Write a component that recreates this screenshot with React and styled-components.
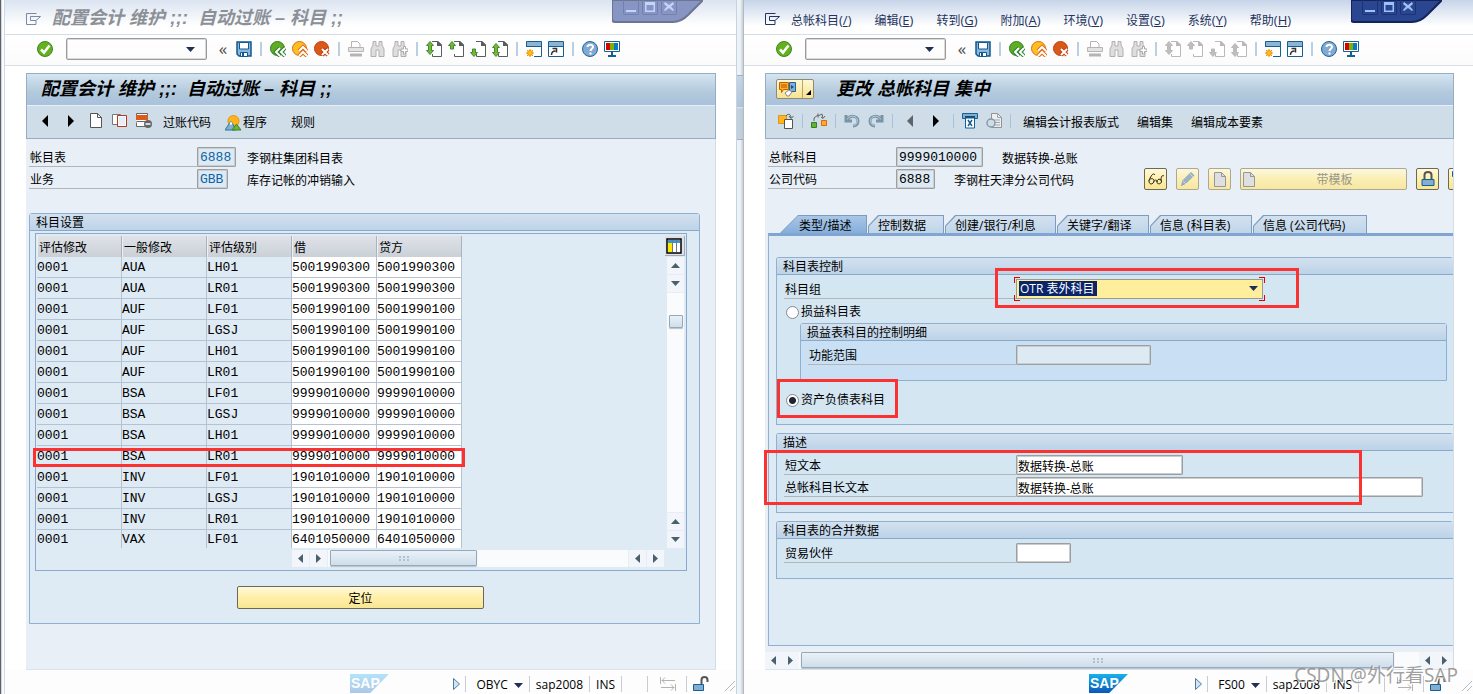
import React from "react";
import styled, { createGlobalStyle, css } from "styled-components";

const GlobalStyle = createGlobalStyle`
  * {
    box-sizing: border-box;
  }

  body {
    margin: 0;
    background: #ffffff;
    color: #000000;
    font-family: "Open Sans", "Noto Sans CJK SC", sans-serif;
    font-size: 12px;
    line-height: 16px;
  }

  button,
  input,
  select {
    font: inherit;
    color: inherit;
    margin: 0;
    padding: 0;
    border: 0;
    border-radius: 0;
    background: none;
  }

  svg {
    display: block;
  }
`;

const mono = css`
  font-family: "Liberation Mono", "Noto Sans CJK SC", monospace;
  font-size: 13px;
`;

/* ---------- desktop and windows ---------- */

const Desktop = styled.div`
  position: relative;
  display: grid;
  grid-template-columns: 5px 731fr 8px 729fr;
  min-height: 100vh;
  overflow: hidden;
`;

const Edge = styled.div`
  border-left: 1px solid #5d6068;
  border-right: 1px solid #cdd8ea;
  background: linear-gradient(to right, #c4c7cd, #f6f8fb 50%, #ffffff);
`;

const Gap = styled.div`
  display: flex;
  flex-direction: column;
  border-left: 1px solid #c6d3e4;
  border-right: 1px solid #b4bac4;
  background: linear-gradient(to right, #edf2f7, #eef3f7 50%, #c9ced5);
`;

const GapPanel = styled.div`
  height: 65px;
  margin-top: 75px;
  border-top: 1px solid #8da3bd;
  border-bottom: 1px solid #8da3bd;
  background: linear-gradient(#bdd0e0, #a3bad4 31px, #dfe7ee 31px, #b8c8d6 33px);
  opacity: 0.8;
`;

const Window = styled.section`
  position: relative;
  display: flex;
  flex-direction: column;
  min-width: 0;
  background: #ffffff;
`;

const MenuBar = styled.div`
  display: flex;
  align-items: center;
  height: 35px;
  padding: 2px 0 0 21px;
  border-bottom: 1px solid #d5dde6;
  background: linear-gradient(${(p) => (p.$active ? "#c6d4e9" : "#dbe4f1")}, #ffffff 26px);
  color: #24345f;
`;

const Menu = styled.nav`
  display: flex;
  gap: 23px;
  margin-left: 10px;
  padding-top: 4px;
`;

const MenuButton = styled.button`
  white-space: nowrap;
  font-size: 13px;
  span {
    font-size: 12px;
  }
`;

const TitleText = styled.h1`
  margin: 0;
  font-family: "Liberation Sans", "Noto Sans CJK SC", sans-serif;
  font-size: 18px;
  line-height: 22px;
  font-weight: bold;
  font-style: italic;
  white-space: pre;
`;

const GhostTitle = styled(TitleText)`
  margin-left: 10px;
  color: #8b9097;
`;

const WindowControls = styled.div`
  position: absolute;
  top: 0;
  right: ${(p) => (p.$active ? "31px" : "33px")};
  width: 91px;
  height: 24px;
`;

const ControlsShape = styled.svg`
  position: absolute;
  inset: 0;
`;

const ControlButtons = styled.div`
  position: absolute;
  top: 0;
  left: 11px;
  display: flex;
  gap: 3px;
`;

const ControlButton = styled.button`
  width: 16px;
  height: 15px;
  border: 1px solid ${(p) => (p.$active ? "#1d3274" : "#7181ab")};
  border-top: 0;
  border-radius: 0 0 2px 2px;
`;

const Toolbar = styled.div`
  display: flex;
  align-items: center;
  gap: 6px;
  height: 31px;
  padding: 0 0 2px 32px;
  border-bottom: 1px solid #d9dee6;
  background: linear-gradient(#ffffff, #fbfbfc);
`;

const Separator = styled.span`
  flex: none;
  width: 2px;
  height: 14px;
  margin: 0 2px;
  background: #b9cfe6;
`;

const AppSeparator = styled.span`
  flex: none;
  width: 1px;
  height: 14px;
  background: #a9c2dc;
`;

const IconButton = styled.button`
  flex: none;
  width: ${(p) => (p.$nav ? "18px" : "16px")};
  height: 16px;
  display: flex;
  justify-content: center;
`;

const CommandField = styled.div`
  display: flex;
  width: 141px;
  height: 22px;
  margin: 0 5px 0 7px;
  border: 1px solid #9a9a9a;
  border-radius: 2px;
  box-shadow: inset 0 0 0 1px #d9d9d9;

  input {
    flex: 1;
    min-width: 0;
    padding: 0 4px;
  }

  button {
    width: 20px;
    padding-top: 1px;
  }
`;

const Chevrons = styled.button`
  font-size: 17px;
  line-height: 16px;
  color: #4a4a4a;
  width: 10px;
  height: 20px;
  margin-right: 2px;
`;

const Main = styled.div`
  flex: 1;
  display: flex;
  flex-direction: column;
  margin: 7px ${(p) => p.$right} 0 21px;
`;

const ScreenHeader = styled.header`
  border: 1px solid #97adc6;
`;

const ScreenTitle = styled.div`
  display: flex;
  align-items: center;
  height: 32px;
  padding: 0 0 1px ${(p) => (p.$withButton ? "10px" : "14px")};
  border-bottom: 1px solid #e6f0f8;
  background: linear-gradient(#d5e4f0, #b2c9dc 60%, #a9c1dc);
`;

const ServiceButton = styled.button`
  display: flex;
  width: 38px;
  height: 20px;
  margin-right: 22px;
  border: 1px solid #8f8a72;
  border-radius: 2px;
  background: linear-gradient(#fff8d6, #f8e38e);

  span {
    border-right: 1px solid #b5a764;
    width: 26px;
    padding: 1px 2px;
  }
`;

const AppToolbar = styled.div`
  display: flex;
  align-items: center;
  gap: 8px;
  height: 32px;
  padding: 0 0 2px ${(p) => p.$inset};
  background: #cfdde8;
  overflow: hidden;
`;

const TextActions = styled.div`
  display: flex;
  gap: ${(p) => p.$gap};
  margin-left: ${(p) => p.$lead};
  padding-top: 3px;
`;

const TextButton = styled.button`
  display: flex;
  align-items: center;
  height: 18px;
  gap: 2px;
  padding-right: ${(p) => (p.$wide ? "10px" : "0")};
  white-space: nowrap;
`;

const ScreenBody = styled.div`
  flex: 1;
  display: flex;
  flex-direction: column;
  padding-top: 8px;
  background: #e8eff6;
  border-right: 1px solid #d3dcea;
  border-bottom: 1px solid #dde3ee;
`;

/* ---------- form parts ---------- */

const Fields = styled.div`
  display: flex;
  flex-direction: column;
  gap: 2px;
  padding-left: 3px;
`;

const Row = styled.div`
  position: relative;
  display: flex;
  height: 20px;
  align-items: center;
  overflow-x: ${(p) => (p.$clip ? "clip" : "visible")};
`;

const Label = styled.label`
  flex: none;
  width: ${(p) => p.$width};
  height: 20px;
  padding: 3px 0 0 1px;
  border-bottom: 1px solid #b2b6b9;
`;

const Field = styled.input`
  flex: none;
  width: ${(p) => p.$width};
  height: 20px;
  padding: 1px 1px 0;
  border: 1px solid #9c9fa1;
  box-shadow: inset 0 0 0 1px #c9cdd0;
  border-radius: 1px;
  background: ${(p) => (p.$editable ? "#ffffff" : "#deeaf3")};
`;

const KeyField = styled(Field)`
  ${mono}
  padding: 0 2px;
  color: ${(p) => (p.$link ? "#0b63a5" : "#000000")};
`;

const FieldNote = styled.span`
  flex: none;
  width: ${(p) => p.$width};
  padding: 3px 0 0 ${(p) => p.$indent};
  white-space: nowrap;
`;

const YellowButtons = styled.div`
  flex: none;
  display: flex;
  gap: 9px;
`;

const YellowButton = styled.button`
  flex: none;
  display: flex;
  align-items: center;
  justify-content: center;
  width: ${(p) => p.$width || "23px"};
  height: ${(p) => (p.$tall ? "23px" : "22px")};
  border: 1px solid ${(p) => (p.disabled ? "#a39c80" : "#6b6857")};
  border-radius: 2px;
  background: linear-gradient(#fff9dd, #ffefa8 50%, #f9e694);
  color: ${(p) => (p.disabled ? "#8a8877" : "#000000")};
  opacity: ${(p) => (p.disabled ? "0.85" : "1")};

  span {
    flex: 1;
    text-align: center;
    padding-top: 2px;
  }
`;

const WideButton = styled(YellowButton)`
  justify-content: flex-start;
  padding: 0 2px;

  span {
    padding-left: 10px;
  }
`;

const Group = styled.fieldset`
  position: relative;
  min-width: 0;
  margin: 0;
  padding: 0 0 15px;
  border: 1px solid #8fb0d1;
  border-right-width: ${(p) => (p.$open ? "0" : "1px")};
  border-radius: 3px 3px 0 0;
  background: ${(p) => p.$fill || "#d5e6f3"};
`;

const GroupTitle = styled.legend`
  float: left;
  width: 100%;
  height: 17px;
  padding: 1px 6px 0;
  border-bottom: 1px solid #89a9c8;
  background: linear-gradient(#d3e1ef, #bdd3e8);
`;

const GroupBody = styled.div`
  clear: both;
  display: flex;
  flex-direction: column;
  gap: 2px;
  padding: 4px 0 0 7px;
`;

/* red frames drawn over the screen */
const Highlight = styled.div`
  position: absolute;
  z-index: 2;
  left: ${(p) => p.$left};
  top: ${(p) => p.$top};
  width: ${(p) => p.$width};
  height: ${(p) => p.$height};
  border: 3px solid #fb3232;
  pointer-events: none;
`;

/* ---------- scroll bars ---------- */

const ScrollBar = styled.div`
  display: flex;
  flex-direction: ${(p) => (p.$vertical ? "column" : "row")};
  ${(p) => (p.$vertical ? "width" : "height")}: 17px;
  gap: 1px;
  background: #e6edf5;
`;

const ScrollArrow = styled.button`
  flex: none;
  width: 17px;
  height: 17px;
  display: flex;
  align-items: center;
  justify-content: center;
  background: #f2f6fb;
`;

const ScrollTrack = styled.div`
  flex: 1;
  display: flex;
  background: #fafbfd;
  padding: ${(p) => p.$inset};
`;

const Thumb = styled.div`
  display: flex;
  align-items: center;
  justify-content: center;
  width: ${(p) => p.$width};
  height: ${(p) => p.$height || "100%"};
  border: 1px solid #97a8b8;
  border-radius: 1px;
  box-shadow: 0 1px 1px #b9c2cc;
  background: linear-gradient(#e9f1f8, #cfdeea);
`;

/* ---------- account table ---------- */

const AccountGroup = styled(Group)`
  margin: 24px 15px 0 3px;
  padding: 0 12px 14px 0;
  background: #deeaf4;

  ${GroupTitle} {
    width: calc(100% + 12px);
  }
`;

const TableFrame = styled.div`
  position: relative;
  display: grid;
  grid-template-columns: 1fr 20px;
  margin-left: 5px;
  padding: 2px 1px 3px;
  border: 1px solid #8ba9cb;
`;

const FrameWrap = styled.div`
  clear: both;
  padding-top: 2px;
`;

const Table = styled.table`
  width: 425px;
  table-layout: fixed;
  border-collapse: separate;
  border-spacing: 0;

  th {
    height: 21px;
    padding: 2px 1px 0;
    border-right: 1px solid #a9b2bd;
    border-left: 1px solid #edf0f3;
    background: linear-gradient(#dfe3e8, #cbd0d7);
    font-weight: normal;
    text-align: left;
  }

  td {
    ${mono}
    height: 21px;
    line-height: 18px;
    padding: 2px 0 0;
    border-right: 1px solid #b6c2d1;
    border-bottom: 1px solid #b6c2d1;
  }

  tr:last-child td {
    height: 18px;
    line-height: 16px;
    border-bottom: 0;
  }

  td.amount {
    background: #ffffff;
  }

  input {
    display: block;
    width: 100%;
    height: 16px;
  }
`;

const SideColumn = styled.div`
  display: flex;
  flex-direction: column;
  align-items: center;
`;

const ConfigButton = styled.button`
  width: 20px;
  height: 20px;
  margin-bottom: 1px;
  padding: 1px;
  border-right: 1px solid #a3a9b5;
  border-bottom: 1px solid #a3a9b5;
  background: #dde2e8;
`;

const BottomScroll = styled(ScrollBar)`
  margin: 2px 1px 0 255px;
`;

const SideScroll = styled(ScrollBar)`
  flex: 1;
`;

const ButtonLine = styled.div`
  display: flex;
  padding: 15px 0 0 207px;
`;

/* ---------- tabs ---------- */

const TabStrip = styled.div`
  display: flex;
  margin: 26px 0 0 3px;
  padding-left: 12px;
  height: 18px;
`;

const Tab = styled.button`
  position: relative;
  flex: none;
  width: ${(p) => p.$width};
  height: 18px;
  margin-right: 1px;
  background: #7d9cc2;
  clip-path: polygon(${(p) => (p.$active ? "0 100%, 18px 0" : "0 60%, 10px 0")}, 100% 0, 100% 100%, 0 100%);

  span {
    position: absolute;
    inset: 1px 1px 0 1px;
    padding: 2px 0 0 ${(p) => (p.$active ? "18px" : "9px")};
    background: ${(p) =>
      p.$active ? "linear-gradient(#a9c6e6, #86aedb)" : "linear-gradient(#d3e1ef, #c0d5ea)"};
    clip-path: polygon(${(p) => (p.$active ? "0 100%, 17px 0" : "0 60%, 10px 0")}, 100% 0, 100% 100%, 0 100%);
    text-align: left;
    white-space: nowrap;
  }
`;

const TabPane = styled.div`
  flex: 1;
  display: flex;
  flex-direction: column;
  gap: 8px;
  margin-left: 3px;
  padding: 21px 0 0 7px;
  border: 1px solid #8fb0d1;
  border-right: 0;
  border-top: 3px solid #80a5d0;
  background: #deeaf4;
`;

const InnerGroup = styled(Group)`
  margin: 0 6px 0 16px;
`;

const RadioLabel = styled.label`
  display: flex;
  align-items: center;
  gap: 2px;
  padding: 2px 0 0 2px;

  input {
    appearance: none;
    width: 13px;
    height: 13px;
    border: 1px solid #85898e;
    border-radius: 50%;
    background: #ffffff;
  }

  input:checked {
    background: radial-gradient(circle, #1b2638 0 3px, #ffffff 4px);
  }
`;

const RadioRow = styled(Row)`
  margin-top: ${(p) => (p.$spaced ? "6px" : "0")};
`;

const SelectBox = styled.div`
  position: relative;
  width: 247px;
  height: 20px;

  select {
    appearance: none;
    width: 100%;
    height: 20px;
    padding-left: 3px;
    border: 1px solid #9c9a88;
    color: #ffffff;
    background: linear-gradient(#0a246a, #0a246a) 2px 1px / 78px 15px no-repeat, #ffee9c;
  }

  svg {
    position: absolute;
    right: 5px;
    top: 7px;
  }
`;

const FocusCorner = styled.i`
  position: absolute;
  width: 6px;
  height: 6px;
  border: 0 solid #e00000;
  ${(p) => p.$v}: -2px;
  ${(p) => p.$h}: -2px;
  border-${(p) => p.$v}-width: 1px;
  border-${(p) => p.$h}-width: 1px;
`;

const ScreenScroll = styled(ScrollBar)`
  margin-top: 6px;
  gap: 0;
`;

/* ---------- status bar ---------- */

const StatusBar = styled.footer`
  display: flex;
  align-items: center;
  height: 24px;
  padding: 4px 0 0 345px;
  background: #fdfdfe;
`;

const SapLogo = styled.div`
  flex: none;
  width: 39px;
  height: 19px;
  margin-bottom: 1px;
  padding-left: 1px;
  background: linear-gradient(#19b1ea, #0b57b8);
  clip-path: polygon(0 0, 100% 0, 52% 100%, 0 100%);
  color: #ffffff;
  font: bold 14px/19px "Liberation Sans", sans-serif;
  opacity: ${(p) => (p.$active ? "1" : "0.32")};
`;

const StatusItems = styled.div`
  display: flex;
  align-items: center;
  margin-left: auto;
`;

const StatusCell = styled.div`
  display: flex;
  align-items: center;
  gap: 6px;
  height: 16px;
  padding: 2px 6px 0;
  border-left: 1px solid #c9ccd6;
`;

const CodeCell = styled(StatusCell)`
  padding-left: 10px;
`;

const StatusIcon = styled(StatusCell)`
  padding: 0 ${(p) => (p.$last ? "15px 0 6px" : "10px 0 12px")};
`;

const StatusGap = styled(StatusCell)`
  width: 26px;
`;

const Watermark = styled.div`
  position: absolute;
  right: 15px;
  bottom: 6px;
  font-family: "Noto Sans", "Noto Sans CJK SC", sans-serif;
  font-size: 19px;
  line-height: 26px;
  color: rgba(130, 130, 130, 0.75);
  text-shadow: 1px 1px 0 #ffffff;
  pointer-events: none;
`;

/* ---------- icons ---------- */

const Icon = ({ children, w = 16, h = 16 }) => (
  <svg width={w} height={h} viewBox={`0 0 ${w} ${h}`} fill="none" aria-hidden="true">
    {children}
  </svg>
);

const ArrowIcon = ({ dir, color = "#1f2f55" }) => {
  const paths = {
    down: "M0 0h9L4.500 5z",
    up: "M0 5h9L4.500 0z",
    left: "M5 0v9L0 4.500z",
    right: "M0 0v9l5-4.500z",
  };
  const flat = dir === "down" || dir === "up";
  return (
    <Icon w={flat ? 9 : 5} h={flat ? 5 : 9}>
      <path d={paths[dir]} fill={color} />
    </Icon>
  );
};

const NavIcon = ({ dir, color = "#000000" }) => (
  <Icon>
    <path d={dir === "left" ? "M11 2v12L5 8z" : "M5 2v12l6-6z"} fill={color} />
  </Icon>
);

const PlayIcon = () => (
  <Icon w={13} h={14}>
    <path d="M1.500 1.500v11l6-5.500z" fill="#d3e3f1" stroke="#4d7ba4" />
  </Icon>
);

const MenuIcon = ({ color }) => (
  <Icon>
    <path d="M10 11v3.500H.500V3.500h10M4.500 10.500V6.500h10L10 10.500H4.500" stroke={color} />
  </Icon>
);

const OkIcon = () => (
  <Icon>
    <circle cx="8" cy="8" r="7.500" fill="#64b120" stroke="#3f8720" />
    <path d="M4 8.500l3 3 5.500-7" stroke="#ffffff" strokeWidth="2.500" />
  </Icon>
);

const SaveIcon = () => (
  <Icon>
    <path d="M1 1h14v14H3l-2-2z" fill="#8fb7da" stroke="#0f5a91" strokeWidth="1.500" />
    <path d="M3.500 1.500h9V8h-9z" fill="#ffffff" stroke="#0f5a91" />
    <path d="M4.500 11.500h7v4h-7z" fill="#ffffff" stroke="#0f5a91" />
    <path d="M6 12h2v3H6z" fill="#0f5a91" />
  </Icon>
);

const RoundIcon = ({ fill, edge, mark }) => (
  <Icon>
    <circle cx="7.500" cy="7.500" r="7" fill={fill} stroke={edge} />
    <path d={mark} stroke={edge} strokeWidth="4" />
    <path d={mark} stroke="#ffffff" strokeWidth="2" />
  </Icon>
);

const PrintIcon = () => (
  <Icon>
    <path d="M3.500 6V.500h6l2.500 2.500v3" stroke="#b5b5b5" fill="#ffffff" />
    <path d="M.500 6.500h15v4H.500z" fill="#e3e3e3" stroke="#b5b5b5" />
    <path d="M2 12.500h12v3H2z" fill="#b5b5b5" />
  </Icon>
);

const FindIcon = ({ plus }) => (
  <Icon>
    <path
      d="M3 3V.500h3V5h3V.500h3V4l2 4v7.500H9V9H6v6.500H1V8l2-4z"
      fill="#dedede"
      stroke="#b0b0b0"
    />
    {plus && (
      <path d="M9 8h2.500V5.500h2V8H16v2.500h-2.500V13h-2v-2.500H9z" fill="#ffffff" stroke="#aaaaaa" />
    )}
  </Icon>
);

const PageIcon = ({ kind, disabled }) => {
  const edge = disabled ? "#b9b9b9" : "#5a5d60";
  const fill = disabled ? "#bdbdbd" : "#79b72c";
  const line = disabled ? "#b9b9b9" : "#3f8a3f";
  const up = "M4 .500L7.500 4.500H5.500V8h-3V4.500H.500z";
  const down = "M4 15.500L.500 11.500h2V8h3v3.500h2z";
  const double = "M4 .500L7.500 4.500H5.500v5h2L4 13.500.500 9.500h2v-5H.500z";
  const lowDouble = "M4 2.500L7.500 6.500H5.500v5h2L4 15.500.500 11.500h2v-5H.500z";
  return (
    <Icon>
      <path d="M6 .500h6l3.500 3.500v11.500h-9V13" fill="#ffffff" stroke={edge} />
      <path d="M11 0h1l4 4v1h-5z" fill={edge} />
      {kind === "up" && <path d={up} fill={fill} stroke={line} />}
      {kind === "down" && <path d={down} fill={fill} stroke={line} />}
      {kind === "first" && <path d={double} fill={fill} stroke={line} />}
      {kind === "last" && <path d={lowDouble} fill={fill} stroke={line} />}
    </Icon>
  );
};

const SessionIcon = ({ shortcut }) => (
  <Icon>
    <path d="M.500.500h15v15H.500z" fill="#ffffff" stroke="#155f92" />
    <path d="M1 1h14v4H1z" fill="#8db3d5" />
    <path d="M1 5.500h14" stroke="#155f92" />
    {shortcut ? (
      <path d="M3.500 14c0-3 1-4 4-4M4.500 7.500h4v4" stroke="#333333" strokeWidth="1.500" />
    ) : (
      <>
        <path d="M0 6h8v10H0z" fill="#ffffff" />
        <path d="M4 8v8M0 12h8M1 9l6 6M7 9l-6 6" stroke="#f0930c" />
        <circle cx="4" cy="12" r="2.500" fill="#ffbe14" stroke="#f0930c" />
      </>
    )}
  </Icon>
);

const HelpIcon = () => (
  <Icon>
    <circle cx="8" cy="8" r="7.500" fill="#82aad0" stroke="#1e6597" />
    <path
      d="M5.500 6c0-3.300 5.500-3 5.500 0 0 1.700-2.500 1.700-2.500 4M8.500 11.500v2"
      stroke="#ffffff"
      strokeWidth="2"
    />
  </Icon>
);

const MonitorIcon = () => (
  <Icon>
    <path d="M.500.500h15v10H.500z" fill="#ffffff" stroke="#155f92" />
    <path d="M2 2h4v7H2z" fill="#d90000" />
    <path d="M6 2h4v7H6z" fill="#7bb300" />
    <path d="M10 2h4v7h-4z" fill="#0a78c8" />
    <path d="M4 15h8M8 11v4" stroke="#155f92" strokeWidth="2" />
  </Icon>
);

const DocIcon = ({ fill = "#ffffff", edge = "#555555" }) => (
  <Icon w={12} h={15}>
    <path d="M.500.500h7l4 4v10H.500z" fill={fill} stroke={edge} />
    <path d="M7.500.500v4h4" stroke={edge} />
  </Icon>
);

const CopyIcon = () => (
  <Icon>
    <path d="M.500 1.500h8v10h-8z" fill="#ffffff" stroke="#777777" />
    <path d="M5.500 2.500h9v11h-9z" fill="#ffffff" stroke="#b03a20" />
    <path d="M7 4h6v8H7z" fill="#e9eef4" />
  </Icon>
);

const DeleteRowIcon = () => (
  <Icon>
    <path d="M.500 2.500v-2h11v13h-11v-4M.500 8.500h10" fill="#ffffff" stroke="#666666" />
    <path d="M0 2h12v5H0z" fill="#dc5a1a" />
    <circle cx="12" cy="11" r="4" fill="#666666" />
    <path d="M9.500 11h5" stroke="#ffffff" strokeWidth="1.500" />
  </Icon>
);

const MountainIcon = () => (
  <Icon>
    <circle cx="8.500" cy="6" r="5.500" fill="#ffb31f" stroke="#ef9208" />
    <path d="M0 15L6 6l5 9z" fill="#7fb0d3" stroke="#2e7399" />
    <path d="M7 15l4.500-6 4.500 6z" fill="#6fb52c" stroke="#39852e" />
    <path d="M4.500 9l1.500 1 1.500-1L6 6z" fill="#ffffff" />
  </Icon>
);

const ServiceIcon = () => (
  <Icon w={18}>
    <path d="M.500 1.500h9v7h-5l-2 3v-3h-2z" fill="#ffb515" stroke="#c65a10" />
    <path d="M2 4h6M2 6h6" stroke="#b24a10" />
    <path d="M10.500 1.500h6v9h-6z" fill="#80aed6" stroke="#1d649b" />
    <path d="M12 4v4l3-2z" fill="#174f80" />
    <path d="M6 12l4-3 3 2-3 4H8z" fill="#ffffff" stroke="#888888" />
  </Icon>
);

const OtherObjectIcon = () => (
  <Icon>
    <path d="M.500 2.500h8v8h-8z" fill="#ffb61c" stroke="#e39412" />
    <path d="M6.500 6.500h8v9h-8z" fill="#ffffff" stroke="#555555" />
    <path d="M8 3c2-3 5-2 5 2M11 3l2 2.500L15.500 3" stroke="#555555" />
  </Icon>
);

const HierarchyIcon = () => (
  <Icon>
    <path d="M.500 9.500h5v5h-5z" fill="#65b22e" stroke="#367c29" />
    <path d="M10.500 7.500h5v5h-5z" fill="#ffb01e" stroke="#dd6518" />
    <path d="M3 8V5l4-3M7 .500v4M7 3l4-2 1 4M10 4l2 1.500L14 3" stroke="#666666" />
  </Icon>
);

const UndoIcon = ({ flip }) => (
  <Icon>
    <g transform={flip ? "matrix(-1 0 0 1 16 0)" : undefined}>
      <path d="M2 2v6h6M3 7c3-6 11-4 11 1 0 3-2 5-5 5" stroke="#7895a8" strokeWidth="3" />
      <path d="M3 6.500c3-5 10-4 10.500 1 0 3-2 5-4 5" stroke="#b8cedc" />
    </g>
  </Icon>
);

const DisplayChangeIcon = () => (
  <Icon>
    <path d="M.500.500h15v5H.500z" fill="#84abd0" stroke="#155f92" />
    <path d="M3 4h10" stroke="#0d4d7b" strokeWidth="2" />
    <path d="M3.500 5h9v10h-9z" fill="#ffffff" stroke="#155f92" />
    <path d="M6 7l4 6M10 7l-4 6" stroke="#155f92" strokeWidth="1.500" />
  </Icon>
);

const PreviewIcon = () => (
  <Icon>
    <path d="M5.500.500h6l4 4v10h-10z" fill="#eeeeee" stroke="#8e9499" />
    <path d="M8 7h6M8 9.500h6M8 12h6M11.500.500v4h4" stroke="#9ea4a8" />
    <circle cx="5" cy="10" r="4" fill="#cddde8" stroke="#889aa6" strokeWidth="1.500" />
  </Icon>
);

const GlassesIcon = () => (
  <Icon>
    <path
      d="M1 10c0-3 5-3 5-.500 0 4-5 5-5 .500M6 10.500c1-2 3-2 3 .500 0 3 5 2 4.500-1C13 7.500 9 7.500 9 11M1 9.500C3 5 5 1 7 4M13 9.500C13 6 14 3.500 16 5"
      stroke="#222222"
    />
  </Icon>
);

const PencilIcon = () => (
  <Icon>
    <path d="M1.500 14.500l1.500-5L11 1.500l3 3-8.500 8z" fill="#8eabc0" stroke="#8b9ca8" />
    <path d="M3 10l3 3M10 3l3 3" stroke="#c7d5df" />
  </Icon>
);

const LockIcon = ({ open }) => (
  <Icon>
    <path
      d={open ? "M8.500 9V4c0-4 6-4 6 0v2" : "M4.500 8V4c0-4 7-4 7 0v4"}
      stroke="#555555"
      strokeWidth="2"
    />
    <path
      d={open ? "M.500 8.500h10v6H.500z" : "M2 8.500h12v6H2z"}
      fill="#84add2"
      stroke="#155f92"
    />
  </Icon>
);

const TransferIcon = () => (
  <Icon>
    <path d="M.500 1v7M2 4.500h13M2 4.500l3-3M2 4.500l3 3M15.500 8v7M14 11.500H1M14 11.500l-3-3M14 11.500l-3 3" stroke="#b3b3b3" />
  </Icon>
);

const ConfigIcon = () => (
  <Icon>
    <path d="M1 1h14v14H1z" fill="#ffffff" stroke="#000000" strokeWidth="1.500" />
    <path d="M2 2h12v3H2z" fill="#3e94d1" />
    <path d="M2 5h4v9H2z" fill="#ffe800" />
    <path d="M6.500 2v12M10.500 2v12" stroke="#6f7782" />
  </Icon>
);

const GripIcon = () => (
  <Icon w={12} h={5}>
    <path d="M1 0h2v2H1zM5 0h2v2H5zM9 0h2v2H9zM1 3h2v2H1zM5 3h2v2H5zM9 3h2v2H9z" fill="#b2c1cd" />
  </Icon>
);

const ResizeIcon = () => (
  <Icon w={12} h={16}>
    <path d="M1 15L11 5M6 15l5-5" stroke="#b5bac5" />
  </Icon>
);

/* ---------- shared window chrome ---------- */

const Controls = ({ active }) => (
  <WindowControls $active={active}>
    <ControlsShape width="91" height="24">
      <path
        d="M0 0h91L76 15q-7 7-15 7H3q-3 0-3-3z"
        fill={active ? "#2b4691" : "#8695c4"}
        stroke={active ? "#14235a" : "#6d7590"}
        strokeWidth="2"
      />
    </ControlsShape>
    <ControlButtons>
      {[
        ["最小化", "M3 11h10v2H3z"],
        ["最大化", "M3 3h10v10H3zM4.500 6v5.500h7V6z"],
        ["关闭", "M4 3l4 3 4-3 1 2-3 2.500L13 11l-1 1-4-3-4 3-1-1 3-3.500L3 5z"],
      ].map(([name, d]) => (
        <ControlButton key={name} aria-label={name} $active={active}>
          <svg width="14" height="14" viewBox="1 1 14 14">
            <path d={d} fillRule="evenodd" fill={active ? "#9cc3f5" : "#c4d5fb"} />
          </svg>
        </ControlButton>
      ))}
    </ControlButtons>
  </WindowControls>
);

const StandardToolbar = ({ pagesDisabled }) => (
  <Toolbar>
    <IconButton aria-label="确认"><OkIcon /></IconButton>
    <CommandField>
      <input aria-label="命令" />
      <button aria-label="命令历史"><ArrowIcon dir="down" /></button>
    </CommandField>
    <Chevrons aria-label="收起">«</Chevrons>
    <IconButton aria-label="保存"><SaveIcon /></IconButton>
    <Separator />
    <IconButton aria-label="返回">
      <RoundIcon fill="#5fae22" edge="#2e7d2a" mark="M10 7l-4 4 4 4M15 7l-4 4 4 4" />
    </IconButton>
    <IconButton aria-label="退出">
      <RoundIcon fill="#ffbf24" edge="#e0690f" mark="M7 10l4-4 4 4M7 15l4-4 4 4" />
    </IconButton>
    <IconButton aria-label="取消">
      <RoundIcon fill="#d95a18" edge="#c23c0e" mark="M8 8l6 6M14 8l-6 6" />
    </IconButton>
    <Separator />
    <IconButton aria-label="打印" disabled><PrintIcon /></IconButton>
    <IconButton aria-label="查找" disabled><FindIcon /></IconButton>
    <IconButton aria-label="继续查找" disabled><FindIcon plus /></IconButton>
    <Separator />
    {["first", "up", "down", "last"].map((kind) => (
      <IconButton key={kind} aria-label={kind} disabled={pagesDisabled}>
        <PageIcon kind={kind} disabled={pagesDisabled} />
      </IconButton>
    ))}
    <Separator />
    <IconButton aria-label="新建会话"><SessionIcon /></IconButton>
    <IconButton aria-label="创建快捷方式"><SessionIcon shortcut /></IconButton>
    <Separator />
    <IconButton aria-label="帮助"><HelpIcon /></IconButton>
    <IconButton aria-label="布局"><MonitorIcon /></IconButton>
  </Toolbar>
);

const Status = ({ code, active }) => (
  <StatusBar>
    <SapLogo $active={active}>SAP</SapLogo>
    <StatusItems>
      <PlayIcon />
      <CodeCell as="button">
        <span>{code}</span>
        <ArrowIcon dir="down" />
      </CodeCell>
      <StatusCell>sap2008</StatusCell>
      <StatusCell>INS</StatusCell>
      <StatusGap />
      <StatusIcon as="span"><TransferIcon /></StatusIcon>
      <StatusIcon as="span" $last><LockIcon open /></StatusIcon>
      <ResizeIcon />
    </StatusItems>
  </StatusBar>
);

const Arrow = ({ dir }) => (
  <ScrollArrow aria-label={dir}>
    <ArrowIcon dir={dir} color="#4b606f" />
  </ScrollArrow>
);

/* ---------- left window ---------- */

const columns = ["评估修改", "一般修改", "评估级别", "借", "贷方"];

const accounts = [
  ["AUA", "LH01", "5001990300"],
  ["AUA", "LR01", "5001990300"],
  ["AUF", "LF01", "5001990100"],
  ["AUF", "LGSJ", "5001990100"],
  ["AUF", "LH01", "5001990100"],
  ["AUF", "LR01", "5001990100"],
  ["BSA", "LF01", "9999010000"],
  ["BSA", "LGSJ", "9999010000"],
  ["BSA", "LH01", "9999010000"],
  ["BSA", "LR01", "9999010000"],
  ["INV", "LF01", "1901010000"],
  ["INV", "LGSJ", "1901010000"],
  ["INV", "LR01", "1901010000"],
  ["VAX", "LF01", "6401050000"],
];

const postingTitle = "配置会计 维护 ;;:  自动过账 – 科目 ;;";

const PostingWindow = () => (
  <Window>
    <MenuBar>
      <MenuIcon color="#7c89a3" />
      <GhostTitle as="div">{postingTitle}</GhostTitle>
    </MenuBar>
    <Controls />
    <StandardToolbar />
    <Main $right="20px">
      <ScreenHeader>
        <ScreenTitle><TitleText>{postingTitle}</TitleText></ScreenTitle>
        <AppToolbar $inset="9px">
          <IconButton $nav aria-label="上一个"><NavIcon dir="left" /></IconButton>
          <IconButton $nav aria-label="下一个"><NavIcon dir="right" /></IconButton>
          <IconButton aria-label="新建"><DocIcon /></IconButton>
          <IconButton aria-label="复制"><CopyIcon /></IconButton>
          <IconButton aria-label="删除行"><DeleteRowIcon /></IconButton>
          <TextActions $gap="14px" $lead="3px">
            <TextButton>过账代码</TextButton>
            <TextButton $wide><MountainIcon />程序</TextButton>
            <TextButton>规则</TextButton>
          </TextActions>
        </AppToolbar>
      </ScreenHeader>
      <ScreenBody>
        <Fields>
          <Row>
            <Label htmlFor="chart" $width="168px">帐目表</Label>
            <KeyField id="chart" $width="39px" $link readOnly defaultValue="6888" />
            <FieldNote $indent="11px">李钢柱集团科目表</FieldNote>
          </Row>
          <Row>
            <Label htmlFor="process" $width="168px">业务</Label>
            <KeyField id="process" $width="31px" $link readOnly defaultValue="GBB" />
            <FieldNote $indent="19px">库存记帐的冲销输入</FieldNote>
          </Row>
        </Fields>
        <AccountGroup>
          <GroupTitle>科目设置</GroupTitle>
          <FrameWrap>
            <TableFrame>
              <Table>
                <thead>
                  <tr>{columns.map((name) => <th key={name}>{name}</th>)}</tr>
                </thead>
                <tbody>
                  {accounts.map(([mod, level, account]) => (
                    <tr key={mod + level}>
                      <td>0001</td>
                      <td>{mod}</td>
                      <td>{level}</td>
                      <td className="amount"><input aria-label="借" defaultValue={account} /></td>
                      <td className="amount"><input aria-label="贷方" defaultValue={account} /></td>
                    </tr>
                  ))}
                </tbody>
              </Table>
              <SideColumn>
                <ConfigButton aria-label="表格设置"><ConfigIcon /></ConfigButton>
                <SideScroll $vertical>
                  <Arrow dir="up" />
                  <Arrow dir="down" />
                  <ScrollTrack $inset="22px 1px 0 2px">
                    <Thumb $width="14px" $height="13px" />
                  </ScrollTrack>
                  <Arrow dir="up" />
                  <Arrow dir="down" />
                </SideScroll>
              </SideColumn>
              <BottomScroll>
                <Arrow dir="left" />
                <Arrow dir="right" />
                <ScrollTrack $inset="0 0 1px 2px">
                  <Thumb $width="147px"><GripIcon /></Thumb>
                </ScrollTrack>
                <Arrow dir="left" />
                <Arrow dir="right" />
              </BottomScroll>
              <Highlight $left="-3px" $top="214px" $width="432px" $height="19px" />
            </TableFrame>
          </FrameWrap>
          <ButtonLine>
            <YellowButton $width="247px" $tall><span>定位</span></YellowButton>
          </ButtonLine>
        </AccountGroup>
      </ScreenBody>
    </Main>
    <Status code="OBYC" />
  </Window>
);

/* ---------- right window ---------- */

const menus = [
  ["总帐科目", "/"],
  ["编辑", "E"],
  ["转到", "G"],
  ["附加", "A"],
  ["环境", "V"],
  ["设置", "S"],
  ["系统", "Y"],
  ["帮助", "H"],
];

const tabs = [
  ["类型/描述", "87px"],
  ["控制数据", "76px"],
  ["创建/银行/利息", "111px"],
  ["关键字/翻译", "92px"],
  ["信息 (科目表)", "102px"],
  ["信息 (公司代码)", "114px"],
];

const AccountWindow = () => (
  <Window>
    <MenuBar $active>
      <MenuIcon color="#24345f" />
      <Menu>
        {menus.map(([name, key]) => (
          <MenuButton key={name}>
            <span>{name}</span>(<u>{key}</u>)
          </MenuButton>
        ))}
      </Menu>
    </MenuBar>
    <Controls active />
    <StandardToolbar pagesDisabled />
    <Main $right="19px">
      <ScreenHeader>
        <ScreenTitle $withButton>
          <ServiceButton aria-label="对象服务">
            <span><ServiceIcon /></span>
            <svg width="10" height="18" viewBox="0 0 10 18"><path d="M8 10v5H3z" /></svg>
          </ServiceButton>
          <TitleText>更改 总帐科目 集中</TitleText>
        </ScreenTitle>
        <AppToolbar $inset="12px">
          <IconButton aria-label="其他对象"><OtherObjectIcon /></IconButton>
          <AppSeparator />
          <IconButton aria-label="层次"><HierarchyIcon /></IconButton>
          <AppSeparator />
          <IconButton aria-label="撤销" disabled><UndoIcon /></IconButton>
          <IconButton aria-label="重做" disabled><UndoIcon flip /></IconButton>
          <AppSeparator />
          <IconButton $nav aria-label="上一个"><NavIcon dir="left" color="#5d656b" /></IconButton>
          <IconButton $nav aria-label="下一个"><NavIcon dir="right" /></IconButton>
          <AppSeparator />
          <IconButton aria-label="显示/更改"><DisplayChangeIcon /></IconButton>
          <IconButton aria-label="预览" disabled><PreviewIcon /></IconButton>
          <AppSeparator />
          <TextActions $gap="18px" $lead="4px">
            <TextButton>编辑会计报表版式</TextButton>
            <TextButton>编辑集</TextButton>
            <TextButton>编辑成本要素</TextButton>
          </TextActions>
        </AppToolbar>
      </ScreenHeader>
      <ScreenBody>
        <Fields>
          <Row>
            <Label htmlFor="account" $width="128px">总帐科目</Label>
            <KeyField id="account" $width="87px" defaultValue="9999010000" />
            <FieldNote $indent="19px">数据转换-总账</FieldNote>
          </Row>
          <Row $clip>
            <Label htmlFor="company" $width="128px">公司代码</Label>
            <KeyField id="company" $width="39px" defaultValue="6888" />
            <FieldNote $indent="19px" $width="209px">李钢柱天津分公司代码</FieldNote>
            <YellowButtons>
              <YellowButton aria-label="显示"><GlassesIcon /></YellowButton>
              <YellowButton aria-label="更改" disabled><PencilIcon /></YellowButton>
              <YellowButton aria-label="创建" disabled><DocIcon fill="#dddddd" edge="#888888" /></YellowButton>
              <WideButton $width="167px" disabled>
                <DocIcon fill="#dddddd" edge="#888888" />
                <span>带模板</span>
              </WideButton>
              <YellowButton aria-label="冻结"><LockIcon /></YellowButton>
              <YellowButton aria-label="删除"><DisplayChangeIcon /></YellowButton>
            </YellowButtons>
          </Row>
        </Fields>
        <TabStrip role="tablist">
          {tabs.map(([name, width], i) => (
            <Tab key={name} role="tab" aria-selected={i === 0} $active={i === 0} $width={width}>
              <span>{name}</span>
            </Tab>
          ))}
        </TabStrip>
        <TabPane>
          <Group $open>
            <GroupTitle>科目表控制</GroupTitle>
            <GroupBody>
              <Row>
                <Label htmlFor="group" $width="232px">科目组</Label>
                <SelectBox>
                  <select id="group">
                    <option>OTR 表外科目</option>
                  </select>
                  <ArrowIcon dir="down" />
                  <FocusCorner $v="top" $h="left" />
                  <FocusCorner $v="top" $h="right" />
                  <FocusCorner $v="bottom" $h="left" />
                  <FocusCorner $v="bottom" $h="right" />
                </SelectBox>
                <Highlight $left="211px" $top="-11px" $width="304px" $height="40px" />
              </Row>
              <RadioRow>
                <RadioLabel>
                  <input type="radio" name="kind" />
                  损益科目表
                </RadioLabel>
              </RadioRow>
              <InnerGroup $fill="#c9dff3">
                <GroupTitle>损益表科目的控制明细</GroupTitle>
                <GroupBody>
                  <Row>
                    <Label htmlFor="area" $width="208px">功能范围</Label>
                    <Field id="area" $width="135px" readOnly />
                  </Row>
                </GroupBody>
              </InnerGroup>
              <RadioRow $spaced>
                <RadioLabel>
                  <input type="radio" name="kind" defaultChecked />
                  资产负债表科目
                </RadioLabel>
                <Highlight $left="-7px" $top="-10px" $width="121px" $height="39px" />
              </RadioRow>
            </GroupBody>
          </Group>
          <Group $open>
            <GroupTitle>描述</GroupTitle>
            <GroupBody>
              <Row>
                <Label htmlFor="short" $width="232px">短文本</Label>
                <Field id="short" $width="167px" $editable defaultValue="数据转换-总账" />
              </Row>
              <Row>
                <Label htmlFor="long" $width="232px">总帐科目长文本</Label>
                <Field id="long" $width="407px" $editable defaultValue="数据转换-总账" />
              </Row>
            </GroupBody>
            <Highlight $left="-13px" $top="16px" $width="598px" $height="55px" />
          </Group>
          <Group $open>
            <GroupTitle>科目表的合并数据</GroupTitle>
            <GroupBody>
              <Row>
                <Label htmlFor="partner" $width="232px">贸易伙伴</Label>
                <Field id="partner" $width="55px" $editable />
              </Row>
            </GroupBody>
          </Group>
        </TabPane>
        <ScreenScroll>
          <Arrow dir="left" />
          <Arrow dir="right" />
          <ScrollTrack $inset="0 25px 1px 2px">
            <Thumb $width="100%"><GripIcon /></Thumb>
          </ScrollTrack>
          <Arrow dir="left" />
          <Arrow dir="right" />
        </ScreenScroll>
      </ScreenBody>
    </Main>
    <Status code="FS00" active />
  </Window>
);

const App = () => (
  <>
    <GlobalStyle />
    <Desktop>
      <Edge />
      <PostingWindow />
      <Gap><GapPanel /></Gap>
      <AccountWindow />
      <Watermark>CSDN @外行看SAP</Watermark>
    </Desktop>
  </>
);

export default App;
